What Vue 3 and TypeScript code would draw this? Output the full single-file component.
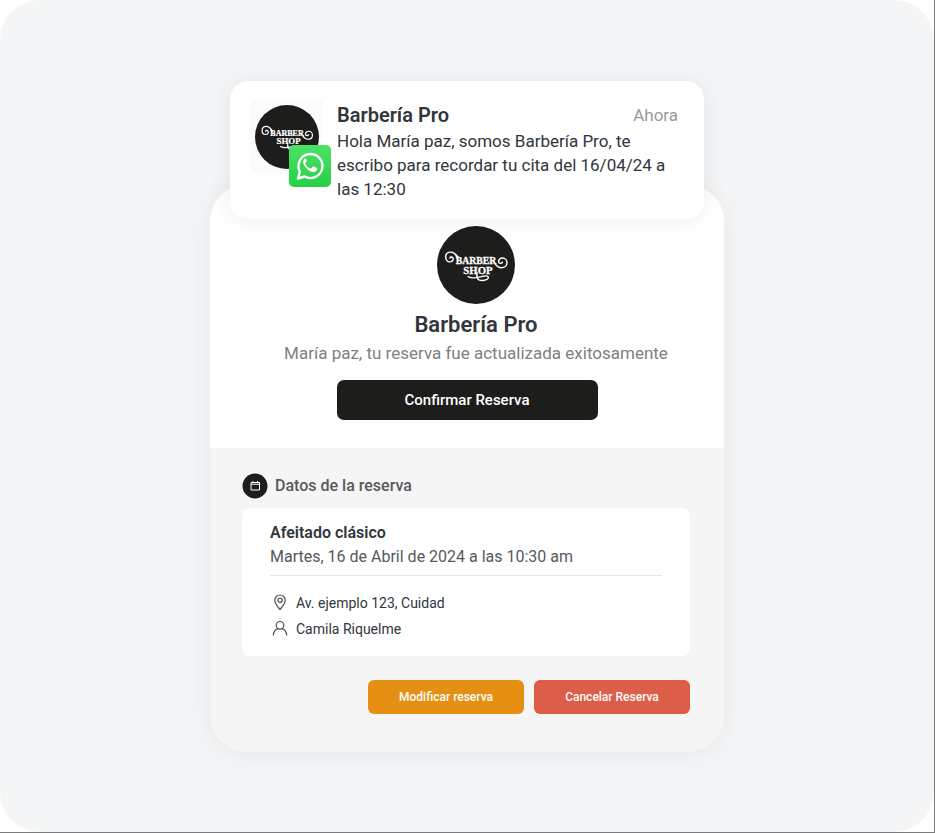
<script setup lang="ts">
import { defineComponent, h } from 'vue'

const business = 'Barbería Pro'
const booking = {
  service: 'Afeitado clásico',
  date: 'Martes, 16 de Abril de 2024 a las 10:30 am',
  address: 'Av. ejemplo 123, Cuidad',
  professional: 'Camila Riquelme',
}

const swirls: string[] = [
  'M21 34C20 29.500 17 26.800 14 26.800C10.800 26.800 8.900 29 8.900 31.800C8.900 34.800 10.800 36.800 13.200 36.800C15.500 36.800 17 35 16.500 33.200C16 31.500 13.800 31.300 13.200 32.800M14 26.800C17 26.800 19.500 29 22 32.500',
  'M57.500 36C60 39 61.500 42.800 66 42.800C69.500 42.800 71.800 40.500 71.800 37.700C71.800 35 69.800 32.800 67.200 32.800C64.700 32.800 62.800 34.700 63.200 36.700C63.600 38.600 66.300 38.900 67 37.200',
  'M32 51.800C37 54.800 43 52.800 47.500 51.500C51 50.600 53.300 51.600 52.600 53.400C51.500 55.800 46 56.600 43 55.300C41 54.300 40.600 52 41 48',
]

const BarberLogo = defineComponent({
  render: () =>
    h('svg', { viewBox: '0 0 80 80', role: 'img', 'aria-label': 'Barber Shop' }, [
      h('circle', { cx: 40, cy: 40, r: 40, fill: '#1d1d1b' }),
      h('g', { fill: '#fff', 'font-family': '"Liberation Serif", serif', 'font-weight': 700, 'text-anchor': 'middle', stroke: '#fff', 'stroke-width': 0.3 }, [
        h('text', { x: 40, y: 39, 'font-size': 10 }, 'BARBER'),
        h('text', { x: 42, y: 49, 'font-size': 11 }, 'SHOP'),
      ]),
      ...swirls.map((d) => h('path', { d, fill: 'none', stroke: '#fff', 'stroke-width': 1.5, 'stroke-linecap': 'round' })),
    ]),
})
</script>

<template>
  <div class="page">
    <main class="stage">
      <article class="notice">
        <div class="avatar">
          <BarberLogo class="avatar-logo" />
          <svg class="whatsapp" viewBox="0 0 42 42" role="img" aria-label="WhatsApp">
            <defs>
              <linearGradient id="wa" x1="0" y1="0" x2="0" y2="1">
                <stop offset="0" stop-color="#4be365" />
                <stop offset="1" stop-color="#27ce48" />
              </linearGradient>
            </defs>
            <rect width="42" height="42" rx="5" fill="url(#wa)" />
            <path d="M9 33.500L10.900 26.700A12 12 0 1 1 15.600 31.500Z" fill="none" stroke="#fff" stroke-width="2.400" stroke-linejoin="round" />
            <path d="M17.300 14.200c-.5-.9-1.500-.8-2.200 0-1.500 1.700-1.200 4 .2 6.200 2 3.100 4.500 5.400 7.900 6.500 2.100.7 4.500-.3 5-2.300.2-1 .1-1.400-.6-1.800l-2.700-1.300c-.6-.3-1-.1-1.400.4l-1 1.300c-.4.400-.8.400-1.300.2-2.200-1-3.700-2.500-4.800-4.500-.2-.4-.1-.8.200-1.100l.9-1.100c.2-.4.2-.7 0-1.100Z" fill="#fff" />
          </svg>
        </div>
        <div class="notice-body">
          <header class="notice-head">
            <h2 class="notice-title">{{ business }}</h2>
            <time class="notice-time">Ahora</time>
          </header>
          <p class="notice-text">Hola María paz, somos Barbería Pro, te escribo para recordar tu cita del 16/04/24 a las 12:30</p>
        </div>
      </article>

      <section class="card">
        <div class="summary">
          <div class="identity">
            <BarberLogo class="brand-logo" />
            <h1 class="brand-name">{{ business }}</h1>
            <p class="status">María paz, tu reserva fue actualizada exitosamente</p>
          </div>
          <button type="button" class="confirm">Confirmar Reserva</button>
        </div>

        <div class="details">
          <h2 class="details-title">
            <svg class="calendar" viewBox="0 0 26 26" aria-hidden="true">
              <circle cx="13" cy="13" r="12.500" fill="#1d1d1b" />
              <path d="M9 9.500h8.500v7.500H9ZM9 11.200h8.500M11 8v2M15.500 8v2" fill="none" stroke="#fff" stroke-width="1" />
            </svg>
            Datos de la reserva
          </h2>
          <div class="booking">
            <div class="booking-head">
              <h3 class="service">{{ booking.service }}</h3>
              <p class="date">{{ booking.date }}</p>
            </div>
            <ul class="facts">
              <li>
                <svg viewBox="0 0 20 20" aria-hidden="true">
                  <path d="M10 16.500C7 13 4.800 10.300 4.800 7.200a5.200 5.200 0 0 1 10.400 0C15.200 10.300 13 13 10 16.500Z" />
                  <circle cx="10" cy="7.200" r="2.200" />
                </svg>
                {{ booking.address }}
              </li>
              <li>
                <svg viewBox="0 0 20 20" aria-hidden="true">
                  <circle cx="10" cy="6.300" r="3.800" />
                  <path d="M3.300 16c.3-3.300 2.300-5.600 4.700-6.400M16.700 16c-.3-3.300-2.300-5.600-4.700-6.400" />
                </svg>
                {{ booking.professional }}
              </li>
            </ul>
          </div>
          <div class="actions">
            <button type="button" class="action edit">Modificar reserva</button>
            <button type="button" class="action cancel">Cancelar Reserva</button>
          </div>
        </div>
      </section>
    </main>
  </div>
</template>

<style>
body {
  background: #fff;
}
</style>

<style scoped>
.page {
  box-sizing: border-box;
  min-height: 100vh;
  display: flex;
  border-right: 1px solid #7b7b7b;
  border-bottom: 1px solid #7b7b7b;
  font-family: Roboto, "Liberation Sans", sans-serif;
  color: #30363b;
}
h1, h2, h3, p, ul {
  margin: 0;
  padding: 0;
}
button {
  border: 0;
  font-family: inherit;
  font-weight: 500;
  color: #fff;
  cursor: pointer;
}
.stage {
  flex: 1;
  display: flex;
  flex-direction: column;
  align-items: center;
  justify-content: center;
  padding: 40px 0;
  border-radius: 40px;
  background: #f3f5f7;
}
.notice {
  position: relative;
  z-index: 1;
  box-sizing: border-box;
  width: min(474px, 92%);
  margin-bottom: -34px;
  padding: 20px 26px 18px 21px;
  display: flex;
  gap: 14px;
  border-radius: 18px;
  background: #fff;
  box-shadow: 0 2px 24px rgba(20, 24, 30, 0.07);
}
.avatar {
  position: relative;
  flex: none;
  box-sizing: border-box;
  width: 72px;
  height: 72px;
  padding: 4px;
  background: #fbfbfb;
}
.avatar-logo {
  display: block;
  width: 64px;
  height: 64px;
}
.whatsapp {
  position: absolute;
  right: -8px;
  bottom: -14px;
  width: 42px;
  height: 42px;
}
.notice-body {
  flex: 1;
}
.notice-head {
  display: flex;
  justify-content: space-between;
  line-height: 28px;
}
.notice-title {
  font-size: 20px;
  font-weight: 600;
}
.notice-time {
  font-size: 17px;
  color: #9a9a9a;
}
.notice-text {
  font-size: 17px;
  line-height: 24px;
}
.card {
  width: min(514px, 100%);
  border-radius: 36px;
  overflow: hidden;
  background: #f5f5f5;
  box-shadow: 0 2px 28px rgba(20, 24, 30, 0.06);
}
.summary {
  display: flex;
  flex-direction: column;
  align-items: center;
  padding: 41px 0 28px;
  background: #fff;
}
.identity {
  display: flex;
  flex-direction: column;
  align-items: center;
  padding-left: 18px;
  text-align: center;
}
.brand-logo {
  width: 78px;
  height: 78px;
}
.brand-name {
  margin-top: 7px;
  font-size: 22px;
  line-height: 28px;
  font-weight: 600;
}
.status {
  margin-top: 2px;
  font-size: 17px;
  line-height: 24px;
  color: #808080;
}
.confirm {
  width: 261px;
  height: 40px;
  margin-top: 15px;
  border-radius: 7px;
  background: #1d1d1b;
  font-size: 15px;
}
.details {
  padding: 25px 34px 38px 32px;
}
.details-title {
  display: flex;
  align-items: center;
  gap: 7px;
  font-size: 16px;
  line-height: 26px;
  font-weight: 500;
  color: #55595c;
}
.calendar {
  width: 26px;
  height: 26px;
}
.booking {
  margin-top: 9px;
  padding: 13px 28px 14px;
  border-radius: 8px;
  background: #fff;
}
.booking-head {
  padding-bottom: 6px;
  border-bottom: 1px solid #e2e7ea;
  font-size: 16px;
  line-height: 24px;
}
.service {
  font-size: 16px;
  font-weight: 600;
}
.date {
  color: #55595c;
}
.facts {
  margin-top: 14px;
  list-style: none;
  font-size: 14px;
  line-height: 26px;
}
.facts li {
  display: flex;
  align-items: center;
  gap: 6px;
}
.facts svg {
  width: 20px;
  height: 20px;
  fill: none;
  stroke: #4a4f53;
  stroke-width: 1.2;
  stroke-linecap: round;
}
.actions {
  display: flex;
  flex-wrap: wrap;
  justify-content: flex-end;
  gap: 10px;
  margin-top: 24px;
}
.action {
  width: 156px;
  height: 34px;
  border-radius: 6px;
  font-size: 12px;
}
.edit {
  background: #e59013;
}
.cancel {
  background: #dd5e48;
}
</style>
